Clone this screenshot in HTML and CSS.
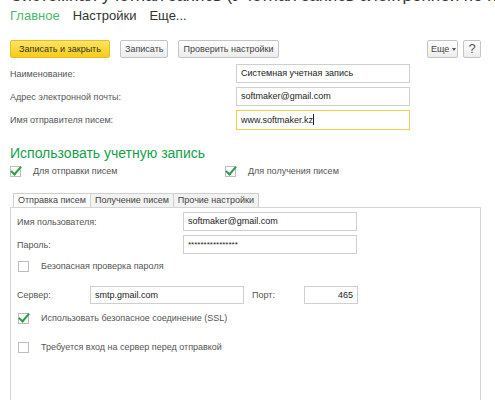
FILE: index.html
```html
<!DOCTYPE html>
<html lang="ru">
<head>
<meta charset="utf-8">
<link rel="stylesheet" href="styles.css">
</head>
<body>
<div class="page">
  <div class="title">Системная учетная запись (Учетная запись электронной почты)</div>
  <div class="nav">
    <span class="nav-item active">Главное</span>
    <span class="nav-item">Настройки</span>
    <span class="nav-item">Еще...</span>
  </div>
  <div class="toolbar">
    <button class="btn btn-primary">Записать и закрыть</button>
    <button class="btn">Записать</button>
    <button class="btn">Проверить настройки</button>
    <span class="spacer"></span>
    <button class="btn btn-more">Еще <span class="caret"></span></button>
    <button class="btn btn-help">?</button>
  </div>
  <div class="form">
    <label class="lbl">Наименование:</label>
    <div class="input">Системная учетная запись</div>
    <label class="lbl">Адрес электронной почты:</label>
    <div class="input">softmaker@gmail.com</div>
    <label class="lbl">Имя отправителя писем:</label>
    <div class="input focus">www.softmaker.kz<span class="cursor"></span></div>
  </div>
  <div class="section-title">Использовать учетную запись</div>
  <div class="use-row">
    <div class="check-item"><span class="cb checked"></span><span class="cb-label">Для отправки писем</span></div>
    <div class="check-item"><span class="cb checked"></span><span class="cb-label">Для получения писем</span></div>
  </div>
  <div class="tabs">
    <span class="tab active">Отправка писем</span>
    <span class="tab">Получение писем</span>
    <span class="tab">Прочие настройки</span>
  </div>
  <div class="panel">
    <div class="pform">
      <label class="lbl">Имя пользователя:</label>
      <div class="input">softmaker@gmail.com</div>
      <label class="lbl">Пароль:</label>
      <div class="input pass">****************</div>
    </div>
    <div class="check-item sub"><span class="cb"></span><span class="cb-label">Безопасная проверка пароля</span></div>
    <div class="server-row">
      <label class="lbl server-lbl">Сервер:</label>
      <div class="input server">smtp.gmail.com</div>
      <label class="lbl port-lbl">Порт:</label>
      <div class="input port">465</div>
    </div>
    <div class="check-item sub ssl"><span class="cb checked"></span><span class="cb-label">Использовать безопасное соединение (SSL)</span></div>
    <div class="check-item sub login"><span class="cb"></span><span class="cb-label">Требуется вход на сервер перед отправкой</span></div>
  </div>
</div>
</body>
</html>
```
FILE: styles.css
```css
* { box-sizing: border-box; }
html, body { margin: 0; padding: 0; background: #fff; }
body {
  font-family: "Liberation Sans", Arial, sans-serif;
  font-size: 9px;
  color: #4a4a4a;
  width: 495px;
  height: 400px;
  overflow: hidden;
}
.page { padding: 0 0 0 10px; }
.title {
  font-size: 17px;
  line-height: 20px;
  color: #333;
  white-space: nowrap;
  overflow: hidden;
  margin-top: -14px;
  height: 20px;
}
.nav {
  display: flex;
  gap: 13px;
  font-size: 13px;
  line-height: 16px;
  height: 16px;
  margin-top: 2px;
  color: #333;
}
.nav-item.active { color: #4cb872; }
.toolbar {
  display: flex;
  align-items: center;
  gap: 10px;
  margin-top: 16px;
  width: 471px;
  height: 18px;
}
.spacer { flex: 1; }
.btn {
  font-family: inherit;
  font-size: 9px;
  height: 18px;
  padding: 0 4px;
  color: #444;
  background: linear-gradient(#ffffff, #ececec);
  border: 1px solid #c4c4c4;
  border-radius: 2px;
  line-height: 16px;
  margin: 0;
  white-space: nowrap;
}
.btn-primary {
  background: linear-gradient(#ffe562, #f6cc16);
  border-color: #e3be2a;
  color: #333;
  padding: 0 6px;
  width: 100px;
}
.btn-more { padding: 0 3px; display: flex; align-items: center; gap: 3px; margin-right: -5px; width: 31px; }
.caret {
  width: 0; height: 0;
  border-left: 2.5px solid transparent;
  border-right: 2.5px solid transparent;
  border-top: 3px solid #555;
}
.btn-help { width: 18px; padding: 0; font-size: 13px; color: #555; }
.form {
  display: grid;
  grid-template-columns: 226px 174px;
  row-gap: 4px;
  margin-top: 6px;
  align-items: center;
}
.lbl { color: #555; white-space: nowrap; }
.input {
  height: 19px;
  border: 1px solid #cfcfcf;
  padding: 0 4px;
  line-height: 17px;
  color: #222;
  white-space: nowrap;
  overflow: hidden;
  background: #fff;
}
.input.focus { border-color: #f2cc55; height: 20px; line-height: 18px; }
.cursor { display: inline-block; width: 1px; height: 11px; background: #222; vertical-align: -2px; }
.section-title {
  font-size: 14px;
  color: #13a14a;
  margin-top: 15px;
  line-height: 16px;
}
.use-row { display: flex; margin-top: 3px; }
.use-row .check-item { width: 215px; }
.check-item { display: flex; align-items: center; height: 14px; }
.cb {
  width: 11px; height: 11px;
  border: 1px solid #bdbdbd;
  background: #fff;
  position: relative;
  flex: none;
}
.cb.checked::after {
  content: "";
  position: absolute;
  left: 2px; top: -3px;
  width: 4px; height: 9px;
  border-right: 2px solid #2e9e49;
  border-bottom: 2px solid #2e9e49;
  transform: rotate(40deg);
}
.cb-label { margin-left: 12px; color: #555; }
.tabs { display: flex; margin-top: 15px; padding-left: 3px; height: 14px; }
.tab {
  border: 1px solid #d0d0d0;
  border-bottom: none;
  border-left: none;
  padding: 0 4px;
  line-height: 13px;
  color: #444;
  background: #f2f2f2;
}
.tab.active { background: #fff; border-left: 1px solid #d0d0d0; }
.panel {
  width: 471px;
  height: 200px;
  border: 1px solid #d4d4d4;
  padding: 4px 0 0 6px;
}
.pform {
  display: grid;
  grid-template-columns: 166px 174px;
  row-gap: 4px;
  align-items: center;
}
.check-item.sub { margin-top: 5px; padding-left: 1px; }
.server-row {
  display: flex;
  align-items: center;
  margin-top: 13px;
}
.server-lbl { width: 73px; }
.input.server { width: 154px; height: 18px; line-height: 16px; }
.port-lbl { width: 52px; margin-left: 8px; }
.input.port { width: 54px; text-align: right; height: 18px; line-height: 16px; }
.input.pass { font-size: 8px; }
.check-item.ssl { margin-top: 7px; }
.check-item.login { margin-top: 15px; }
```
